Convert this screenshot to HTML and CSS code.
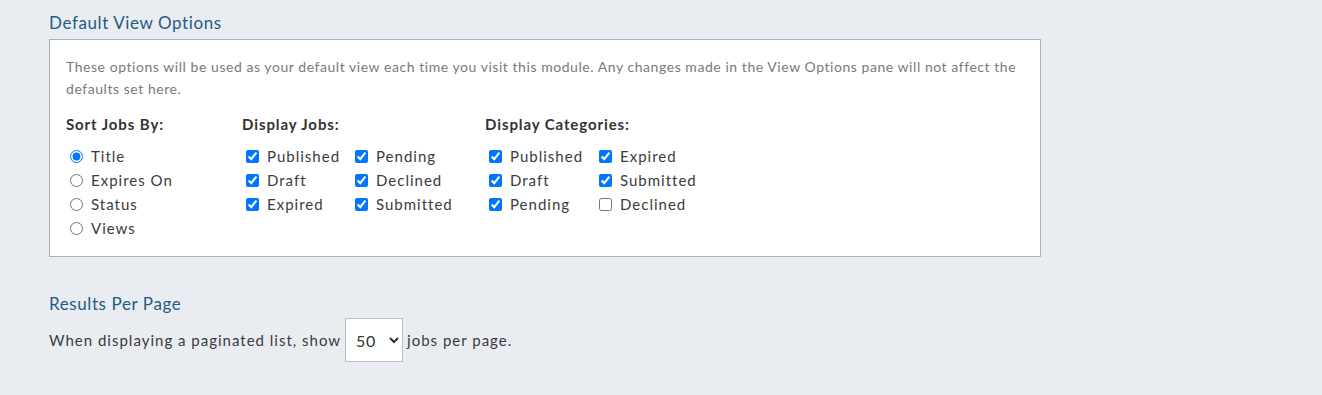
FILE: index.html
```html
<!DOCTYPE html>
<html>
<head>
<meta charset="utf-8">
<link rel="stylesheet" href="styles.css">
</head>
<body>
<div class="page">
  <h2 class="section-title">Default View Options</h2>
  <div class="panel">
    <p class="desc">These options will be used as your default view each time you visit this module. Any changes made in the View Options pane will not affect the defaults set here.</p>
    <div class="groups">
      <div class="group g-sort">
        <div class="group-title">Sort Jobs By:</div>
        <div class="opts one">
          <label class="opt"><input type="radio" name="sort" checked> Title</label>
          <label class="opt"><input type="radio" name="sort"> Expires On</label>
          <label class="opt"><input type="radio" name="sort"> Status</label>
          <label class="opt"><input type="radio" name="sort"> Views</label>
        </div>
      </div>
      <div class="group g-jobs">
        <div class="group-title">Display Jobs:</div>
        <div class="opts two jobs">
          <label class="opt"><input type="checkbox" checked> Published</label>
          <label class="opt"><input type="checkbox" checked> Pending</label>
          <label class="opt"><input type="checkbox" checked> Draft</label>
          <label class="opt"><input type="checkbox" checked> Declined</label>
          <label class="opt"><input type="checkbox" checked> Expired</label>
          <label class="opt"><input type="checkbox" checked> Submitted</label>
        </div>
      </div>
      <div class="group g-cats">
        <div class="group-title">Display Categories:</div>
        <div class="opts two cats">
          <label class="opt"><input type="checkbox" checked> Published</label>
          <label class="opt"><input type="checkbox" checked> Expired</label>
          <label class="opt"><input type="checkbox" checked> Draft</label>
          <label class="opt"><input type="checkbox" checked> Submitted</label>
          <label class="opt"><input type="checkbox" checked> Pending</label>
          <label class="opt"><input type="checkbox"> Declined</label>
        </div>
      </div>
    </div>
  </div>
  <h2 class="section-title second">Results Per Page</h2>
  <div class="per-page">
    <span>When displaying a paginated list, show</span>
    <select class="sel">
      <option>10</option>
      <option>25</option>
      <option selected>50</option>
      <option>100</option>
    </select>
    <span>jobs per page.</span>
  </div>
</div>
</body>
</html>
```

FILE: styles.css
```css
html, body {
  margin: 0;
  padding: 0;
  background: #e9edf1;
}
body {
  font-family: Lato, "Open Sans", sans-serif;
  color: #3b3b3b;
  font-size: 15px;
}
.page {
  padding: 12px 0 0 49px;
}
.section-title {
  margin: 0;
  font-weight: 400;
  font-size: 17px;
  line-height: 22px;
  letter-spacing: 0.6px;
  color: #245b83;
}
.section-title.second {
  margin-top: 36px;
}
.panel {
  box-sizing: border-box;
  width: 992px;
  margin-top: 5px;
  background: #fff;
  border: 1px solid #a7b2bf;
  padding: 16px 16px 16px 16px;
}
.desc {
  margin: 0;
  font-size: 14px;
  line-height: 22px;
  letter-spacing: 0.55px;
  color: #7a7a7a;
}
.groups {
  display: flex;
  margin-top: 14px;
}
.group-title {
  font-weight: 700;
  font-size: 15px;
  line-height: 20px;
  letter-spacing: 0.9px;
  color: #333;
  margin-bottom: 10px;
}
.g-sort { width: 176px; }
.g-jobs { width: 243px; }
.opts {
  display: grid;
  row-gap: 0;
}
.opts.two { grid-template-columns: 109px auto; }
.opts.cats { grid-template-columns: 110px auto; }
.opt {
  display: flex;
  align-items: center;
  height: 24px;
  font-size: 15px;
  letter-spacing: 1px;
  color: #3b3b3b;
  white-space: nowrap;
}
.opt input {
  margin: 0 8px 0 4px;
  width: 13px;
  height: 13px;
}
.per-page {
  display: flex;
  align-items: center;
  margin-top: 3px;
  font-size: 15px;
  letter-spacing: 1px;
  color: #3b3b3b;
}
.sel {
  margin: 0 4px;
  width: 58px;
  height: 44px;
  background: #fff;
  border: 1px solid #b7c0ca;
  border-radius: 0;
  font-family: Lato, sans-serif;
  font-size: 16px;
  letter-spacing: 0.5px;
  color: #333;
  padding: 0 4px 0 6px;
}
```
